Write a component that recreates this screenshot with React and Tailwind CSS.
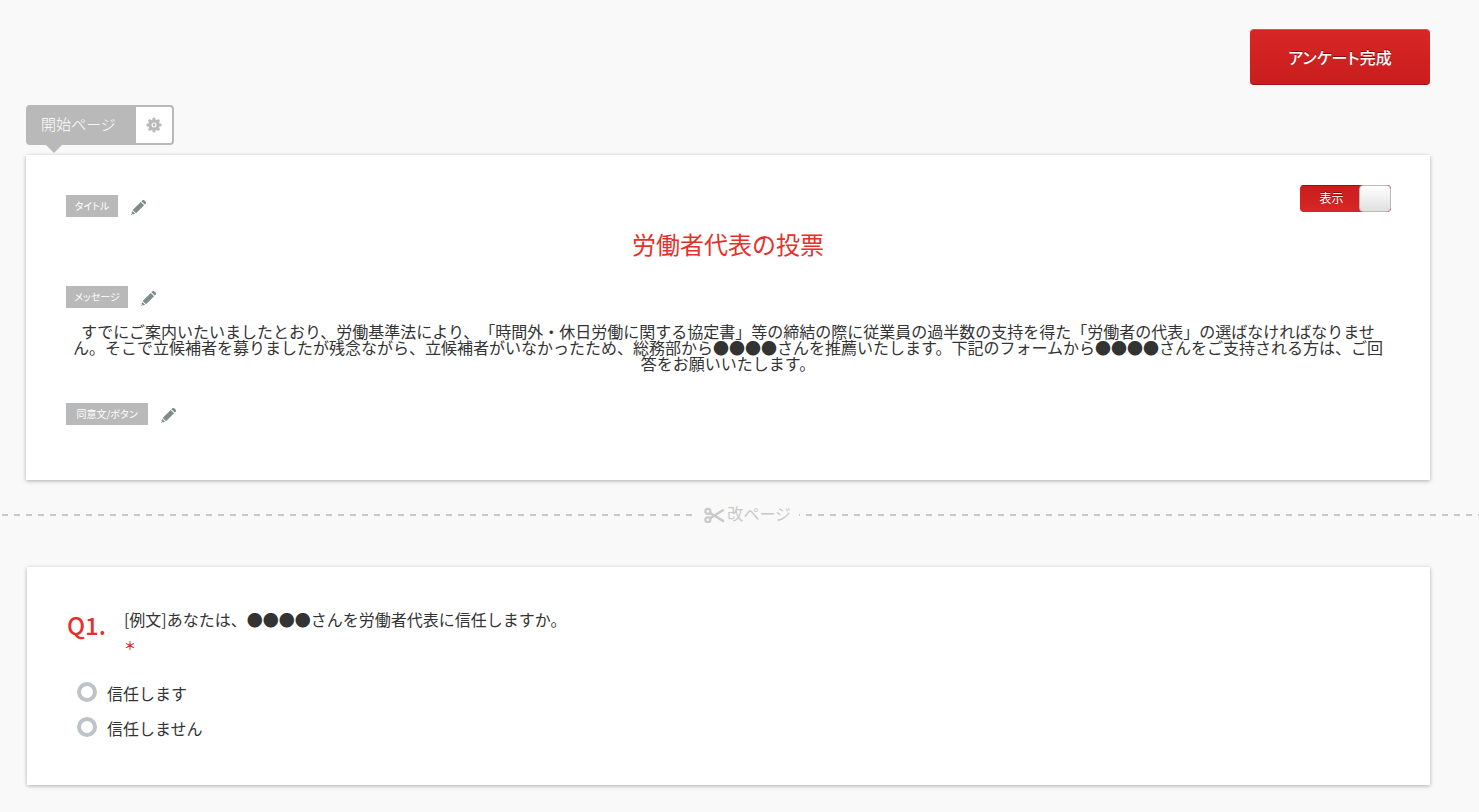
import { useState } from 'react'

const MESSAGE = 'すでにご案内いたいましたとおり、労働基準法により、「時間外・休日労働に関する協定書」等の締結の際に従業員の過半数の支持を得た「労働者の代表」の選ばなければなりません。そこで立候補者を募りましたが残念ながら、立候補者がいなかったため、総務部から●●●●さんを推薦いたします。下記のフォームから●●●●さんをご支持される方は、ご回答をお願いいたします。'

const OPTIONS = ['信任します', '信任しません']

function PencilIcon() {
  return (
    <svg viewBox="0 0 16 16" className="w-4 h-4 fill-[#7f8c8d]">
      <g transform="rotate(-45 8 8)">
        <path d="M15.2 5.6h1.5a1.2 1.2 0 0 1 1.2 1.2v2.4a1.2 1.2 0 0 1-1.2 1.2h-1.5z" />
        <path d="M2.8 5.6h11.4v4.8H2.8z" />
        <path d="M1.9 6v4L-.2 9V7zM-1.9 8l1.1-.7v1.4z" />
      </g>
    </svg>
  )
}

function GearIcon() {
  return (
    <svg viewBox="0 0 16 16" className="w-4 h-4 fill-[#b9b9b9]">
      {[0, 45, 90, 135].map(a => (
        <rect key={a} x="6.6" y="0.5" width="2.8" height="15" rx="1" transform={`rotate(${a} 8 8)`} />
      ))}
      <circle cx="8" cy="8" r="5.8" />
      <circle cx="8" cy="8" r="2.5" className="fill-white" />
      <circle cx="8" cy="8" r="1.4" />
    </svg>
  )
}

function ScissorsIcon() {
  return (
    <svg viewBox="0 0 21 16" className="w-[21px] h-4 fill-none stroke-[#c9c9c9]" strokeWidth="2.3">
      <circle cx="3.9" cy="4.4" r="2.5" />
      <circle cx="3.9" cy="12.8" r="2.5" />
      <path d="M6 6 19 13.900M6 11.200 19 3.300" strokeLinecap="round" strokeWidth="2.4" />
    </svg>
  )
}

function TagRow({ label, width }) {
  return (
    <div className="flex items-center gap-3">
      <span className={`bg-[#b9b9b9] h-[22px] leading-[22px] text-center text-[10px] text-white [font-feature-settings:'palt'] ${width}`}>{label}</span>
      <button type="button" aria-label={`${label}を編集`} className="pt-1">
        <PencilIcon />
      </button>
    </div>
  )
}

function Card({ children, className }) {
  return <section className={`bg-white px-10 shadow-[0_1px_4px_rgba(0,0,0,0.3)] ${className}`}>{children}</section>
}

export default function App() {
  const [visible, setVisible] = useState(true)
  const [answer, setAnswer] = useState('')

  return (
    <main className="min-h-screen bg-[#f9f9f9] pt-[29px] pb-[27px] text-base text-[#333] [text-spacing-trim:space-all] font-['Noto_Sans_CJK_JP','Noto_Sans',sans-serif]">
      <div className="ml-[26px] mr-[49px]">
        <div className="flex justify-end">
          <button
            type="button"
            className="w-[180px] h-14 rounded bg-linear-to-b from-[#d82626] to-[#c91d1d] border-t border-b border-t-[#e25050] border-b-[#a51414] text-base font-medium text-white [font-feature-settings:'palt'] [text-shadow:0_-1px_0_#7d1010]"
          >
            アンケート完成
          </button>
        </div>

        <div className="relative mt-5 inline-flex h-10 rounded bg-[#b9b9b9] p-0.5 align-top">
          <h2 className="w-[108px] pl-[13px] leading-[34px] text-[15px] font-light text-white [font-feature-settings:'palt']">開始ページ</h2>
          <button type="button" aria-label="ページ設定" className="flex w-9 items-center justify-center rounded-r-xs bg-white">
            <GearIcon />
          </button>
          <span className="absolute left-5 top-full border-8 border-b-0 border-transparent border-t-[#b9b9b9]" />
        </div>

        <Card className="mt-2.5 pt-[30px] pb-[55px]">
          <div className="flex items-start justify-between">
            <div className="mt-2.5">
              <TagRow label="タイトル" width="w-[52px]" />
            </div>
            <button
              type="button"
              role="switch"
              aria-checked={visible}
              onClick={() => setVisible(!visible)}
              className="-mr-px flex h-[27px] w-[91px] overflow-hidden rounded bg-linear-to-b from-[#c91d1d] to-[#d82626] text-xs text-white"
            >
              <span className="flex-1 border-t border-[#951010] pl-1 leading-6 [text-shadow:0_-1px_0_#7d1010]">{visible ? '表示' : '非表示'}</span>
              <span className="h-full w-8 rounded border border-[#bbb] bg-linear-to-b from-white to-[#e0e0e0]" />
            </button>
          </div>
          <h1 className="mt-[15px] text-center text-2xl leading-6 text-[#e8302a]">労働者代表の投票</h1>
          <div className="mt-[30px]">
            <TagRow label="メッセージ" width="w-[62px]" />
          </div>
          <p className="mt-[15px] text-center leading-4">{MESSAGE}</p>
          <div className="mt-8">
            <TagRow label="同意文/ボタン" width="w-[82px]" />
          </div>
        </Card>
      </div>

      <div className="mt-[23px] ml-0.5 flex h-6 justify-center bg-[repeating-linear-gradient(90deg,#c9c9c9_0_6px,transparent_6px_12px)] bg-[length:100%_2px] bg-center bg-no-repeat text-[#c9c9c9]">
        <span className="ml-3 flex items-center gap-0.5 bg-[#f9f9f9] pl-2.5 pr-2 [font-feature-settings:'palt']">
          <ScissorsIcon />
          <span className="pb-1">改ページ</span>
        </span>
      </div>

      <Card className="mt-10 ml-[27px] mr-[49px] pt-[39px] pb-10">
        <div className="flex gap-[18px]">
          <span className="text-2xl leading-[38px] font-medium text-[#e8302a]">Q1.</span>
          <div className="leading-[26px]">
            <p id="q1">[例文]あなたは、●●●●さんを労働者代表に信任しますか。</p>
            <p className="text-xs leading-7 font-medium text-[#d01c1c]">＊</p>
          </div>
        </div>
        <div role="radiogroup" aria-labelledby="q1" className="mt-[15px] ml-2.5">
          {OPTIONS.map(o => (
            <label key={o} className="flex h-[35px] items-center gap-2.5">
              <input
                type="radio"
                name="q1"
                value={o}
                checked={answer === o}
                onChange={() => setAnswer(o)}
                className="mb-0.5 size-5 appearance-none rounded-full border-4 border-[#bdc3c7] checked:bg-[#e8302a]"
              />
              {o}
            </label>
          ))}
        </div>
      </Card>
    </main>
  )
}
